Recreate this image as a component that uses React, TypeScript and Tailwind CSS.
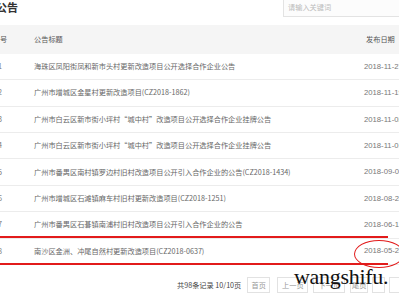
const rows = [
  { n: 1, title: "海珠区凤阳街凤和新市头村更新改造项目公开选择合作企业公告", date: "2018-11-27" },
  { n: 2, title: "广州市增城区金星村更新改造项目(CZ2018-1862)", date: "2018-11-19" },
  { n: 3, title: "广州市白云区新市街小坪村“城中村”改造项目公开选择合作企业挂牌公告", date: "2018-11-02" },
  { n: 4, title: "广州市白云区新市街小坪村“城中村”改造项目公开选择合作企业挂牌公告", date: "2018-11-01" },
  { n: 5, title: "广州市番禺区南村镇罗边村旧村改造项目公开引入合作企业的公告(CZ2018-1434)", date: "2018-09-03" },
  { n: 6, title: "广州市增城区石滩镇麻车村旧村更新改造项目(CZ2018-1251)", date: "2018-08-24" },
  { n: 7, title: "广州市番禺区石碁镇南浦村旧村改造项目公开引入合作企业的公告", date: "2018-06-15" },
  { n: 8, title: "南沙区金洲、冲尾自然村更新改造项目(CZ2018-0637)", date: "2018-05-28" },
];

export default function App() {
  return (
    <div className="relative w-[399px] h-[300px] overflow-hidden bg-white font-['Noto_Sans_CJK_SC','Liberation_Sans',sans-serif]">
      <div className="ml-[-10px] w-[430px]">
        {/* Title + search */}
        <div className="flex h-[25px] items-start">
          <div className="ml-[6px] w-[30px] shrink-0 whitespace-nowrap text-[11px] leading-[14px] font-bold text-[#333]">公告</div>
          <div className="ml-[257px] mt-[-3px] h-[20px] w-[140px] shrink-0 border border-[#e3e3e3] bg-[#fcfcfc] pl-[4px] pt-[5px] text-[7.2px] leading-[9px] text-[#bbb]">
            请输入关键词
          </div>
        </div>

        {/* Table head */}
        <div className="flex h-[28.8px] items-center bg-[#f5f5f5] text-[7.2px] text-[#555]">
          <div className="w-[20px] shrink-0 text-center">序号</div>
          <div className="w-[346px] shrink-0 pl-[24px]">公告标题</div>
          <div className="w-[50px] shrink-0 pl-[10px]">发布日期</div>
        </div>

        {/* Rows */}
        {rows.map((r) => (
          <div
            key={r.n}
            className="relative flex h-[26.4px] items-center border-b border-[#ececec] text-[7.2px] text-[#666]"
          >
            <div className="w-[20px] shrink-0 text-center text-[#777]">{r.n}</div>
            <div className="w-[346px] shrink-0 truncate pl-[24px]">{r.title}</div>
            <div className="w-[50px] shrink-0 whitespace-nowrap pl-[8px] font-['Liberation_Sans',sans-serif] text-[7.7px] text-[#777]">
              {r.date}
            </div>
            {r.n === 8 && (
              <>
                <span className="pointer-events-none absolute left-[6px] top-[-3px] h-[29px] w-[392px] border-2 border-r-0 border-[#e21b1b]" />
                <span className="pointer-events-none absolute left-[364px] top-[1px] h-[28px] w-[50px] rounded-[50%] border-[1.5px] border-[#e21b1b]" />
              </>
            )}
          </div>
        ))}

        {/* Pagination */}
        <div className="mt-[12px] flex h-[16px] items-center pl-[187px] text-[7.2px] text-[#444]">
          <span className="whitespace-nowrap">共98条记录 10/10页</span>
          <span className="ml-[6px] flex h-[16px] w-[23px] shrink-0 items-center justify-center border border-[#e2e2e2] text-[#999]">首页</span>
          <span className="ml-[7px] flex h-[16px] w-[31px] shrink-0 items-center justify-center border border-[#e2e2e2] text-[#999]">上一页</span>
          <span className="ml-[5px] flex h-[16px] w-[32px] shrink-0 items-center justify-center border border-[#e2e2e2] text-[#999]">下一页</span>
          <span className="ml-[5px] flex h-[16px] w-[18px] shrink-0 items-center justify-center border border-[#e2e2e2] text-[#999]">尾页</span>
          <span className="ml-[4px] h-[16px] w-[13px] shrink-0 border border-[#e2e2e2]" />
          <span className="ml-[4px] h-[16px] w-[20px] shrink-0 border border-[#e2e2e2]" />
        </div>
      </div>

      {/* Watermark */}
      <div className="pointer-events-none absolute left-[294px] top-[264px] font-['Liberation_Serif',serif] text-[22px] leading-[26px] tracking-[-0.3px] text-[#111]">
        wangshifu.
      </div>
    </div>
  );
}
